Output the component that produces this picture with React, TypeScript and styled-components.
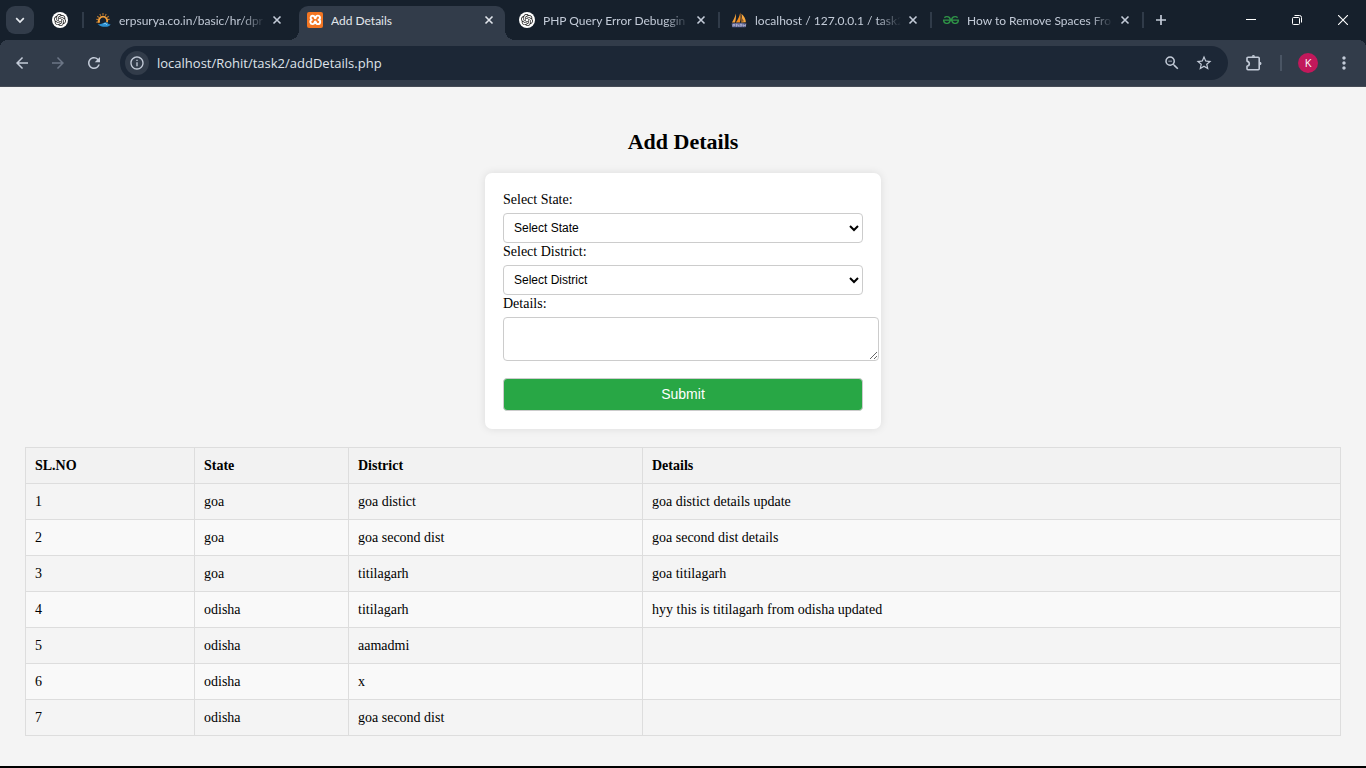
import React from "react";
import styled, { createGlobalStyle } from "styled-components";
import {
  MdArrowBack,
  MdArrowForward,
  MdInfoOutline,
  MdMoreVert,
  MdRefresh,
  MdStarBorder,
  MdZoomOut,
} from "react-icons/md";
import { SiGeeksforgeeks, SiOpenai } from "react-icons/si";

const GlobalStyle = createGlobalStyle`
  *, *::before, *::after { box-sizing: border-box; }
  body { margin: 0; background: #f4f4f4; }
  button { font: inherit; cursor: pointer; }
`;

const chromeFont = `"Open Sans", "Noto Sans", sans-serif`;
const tabFont = `Lato, "Open Sans", sans-serif`;
const serif = `"Liberation Serif", "Times New Roman", serif`;
const sans = `"Liberation Sans", Arial, sans-serif`;

const Window = styled.div`
  display: flex;
  flex-direction: column;
  min-height: 100vh;
  border-bottom: 2px solid #000;
  background: #f4f4f4;
`;

/* ---------- browser chrome ---------- */

const TabStrip = styled.header`
  display: flex;
  align-items: center;
  height: 40px;
  padding-left: 6px;
  background: #16202c;
  font-family: ${tabFont};
  font-size: 12px;
  color: #c3cbd8;
`;

const IconButton = styled.button<{ $w?: number; $h?: number; $dim?: boolean }>`
  display: inline-flex;
  align-items: center;
  justify-content: center;
  flex: none;
  width: ${({ $w = 28 }) => $w}px;
  height: ${({ $h = 28 }) => $h}px;
  padding: 0;
  border: 0;
  background: none;
  color: ${({ $dim }) => ($dim ? "#6c7686" : "#c3cbd8")};
`;

const TabSearch = styled(IconButton)`
  border-radius: 9px;
  background: #323c4a;
  color: #e6eaf0;
`;

const PinnedTab = styled.div`
  display: flex;
  justify-content: center;
  flex: none;
  width: 47px;
  padding-left: 5px;
`;

const Separator = styled.span`
  flex: none;
  width: 2px;
  height: 16px;
  margin: 0 3px 0 1px;
  background: #303b49;
`;

const Gap = styled(Separator)`
  background: transparent;
`;

const Tab = styled.div<{ $active?: boolean }>`
  position: relative;
  display: flex;
  align-items: center;
  align-self: flex-end;
  flex: 0 1 206px;
  min-width: 0;
  height: 34px;
  padding: 0 8px 6px;
  border-radius: 9px 9px 0 0;
  background: ${({ $active }) => ($active ? "#323c4a" : "transparent")};
  color: ${({ $active }) => ($active ? "#e2e6ec" : "#c3cbd8")};

  &::before,
  &::after {
    content: "";
    display: ${({ $active }) => ($active ? "block" : "none")};
    position: absolute;
    bottom: 0;
    width: 10px;
    height: 10px;
  }
  &::before {
    right: 100%;
    background: radial-gradient(circle at 0 0, transparent 10px, #323c4a 10px);
  }
  &::after {
    left: 100%;
    background: radial-gradient(circle at 100% 0, transparent 10px, #323c4a 10px);
  }
`;

const TabTitle = styled.span<{ $fade?: boolean }>`
  flex: 1;
  min-width: 0;
  margin: 0 4px 0 8px;
  padding-top: 2px;
  overflow: hidden;
  white-space: nowrap;
  line-height: 20px;
  mask-image: ${({ $fade }) =>
    $fade ? "linear-gradient(to right, #000 122px, transparent 146px)" : "none"};
`;

const CloseTab = styled(IconButton)`
  color: inherit;
`;

const Disc = styled.span`
  display: inline-flex;
  align-items: center;
  justify-content: center;
  flex: none;
  width: 16px;
  height: 16px;
  border-radius: 50%;
  background: #fff;
  color: #222;
`;

const XamppTile = styled.span`
  display: inline-flex;
  flex: none;
  width: 16px;
  height: 16px;
  border-radius: 2px;
  background: #f37623;
`;

const WindowControls = styled.div`
  display: flex;
  margin-left: auto;
`;

const ControlButton = styled(IconButton)`
  color: #fff;
`;

const Toolbar = styled.nav`
  display: flex;
  align-items: center;
  height: 47px;
  padding: 0 4px;
  border-bottom: 1px solid #454b55;
  background:
    radial-gradient(circle at 8px 8px, transparent 8px, #16202c 8px) 0 0 / 8px 8px no-repeat,
    radial-gradient(circle at 0 8px, transparent 8px, #16202c 8px) 100% 0 / 8px 8px no-repeat,
    #323c4a;
  font-family: ${chromeFont};
`;

const AddressBar = styled.div`
  display: flex;
  align-items: center;
  flex: 1;
  min-width: 0;
  height: 34px;
  margin-left: 8px;
  padding: 0 8px 0 5px;
  border-radius: 17px;
  background: #1c2736;
`;

const SiteInfo = styled(IconButton)`
  border-radius: 50%;
  background: #323c4a;
`;

const Address = styled.input`
  flex: 1;
  min-width: 0;
  padding: 0;
  margin-left: 8px;
  border: 0;
  outline: 0;
  background: none;
  font-family: ${chromeFont};
  font-size: 13px;
  color: #dfe3ea;
`;

const ToolbarDivider = styled.span`
  width: 2px;
  height: 16px;
  margin-right: 8px;
  background: #4a5564;
`;

const Avatar = styled.span`
  display: flex;
  align-items: center;
  justify-content: center;
  width: 20px;
  height: 20px;
  border-radius: 50%;
  background: #c2185b;
  color: #fff;
  font-size: 11px;
  line-height: 20px;
`;

/* ---------- page ---------- */

const Page = styled.main`
  flex: 1;
  padding: 43px 25px 30px;
  font-family: ${serif};
  font-size: 14px;
  color: #000;
`;

const Heading = styled.h2`
  margin: 0 0 19px;
  font-size: 22px;
  line-height: 24px;
  text-align: center;
`;

const Card = styled.form`
  width: 100%;
  max-width: 396px;
  margin: 0 auto 18px;
  padding: 18px;
  border-radius: 7px;
  background: #fff;
  box-shadow: 0 0 9px rgba(0, 0, 0, 0.1);
`;

const Label = styled.label`
  display: block;
  margin-bottom: 5px;
  line-height: 17px;
`;

const Select = styled.select`
  display: block;
  width: 100%;
  height: 30px;
  padding: 0 6px;
  border: 1px solid #ccc;
  border-radius: 4px;
  background: #fff;
  font-family: ${sans};
  font-size: 12px;
  color: #000;
`;

const TextArea = styled.textarea`
  display: block;
  box-sizing: content-box;
  width: 100%;
  height: 28px;
  margin-bottom: 17px;
  padding: 7px;
  border: 1px solid #ccc;
  border-radius: 4px;
  font-family: ${sans};
  font-size: 12px;
`;

const Submit = styled.button`
  display: block;
  width: 100%;
  height: 33px;
  padding: 0 0 2px;
  border: 1px solid #ccc;
  border-radius: 4px;
  background: #28a745;
  color: #fff;
  && {
    font-family: ${sans};
    font-size: 14px;
  }
`;

const Table = styled.table`
  width: 100%;
  table-layout: fixed;
  border-collapse: collapse;

  tbody tr:nth-child(even) {
    background: #f9f9f9;
  }
`;

const HeadCell = styled.th<{ $width?: string }>`
  width: ${({ $width = "auto" }) => $width};
  height: 36px;
  padding: 0 9px;
  border: 1px solid #ddd;
  background: #f2f2f2;
  text-align: left;
`;

const Cell = styled.td`
  height: 36px;
  padding: 0 9px;
  border: 1px solid #ddd;
`;

/* ---------- drawings ---------- */

const CloseGlyph = () => (
  <svg width="10" height="10" viewBox="0 0 10 10" fill="none" stroke="currentColor" strokeWidth="1.6">
    <path d="M1.5 1.5l7 7M8.5 1.5l-7 7" />
  </svg>
);

const ChatGptIcon = () => (
  <Disc>
    <SiOpenai size={12} />
  </Disc>
);

const SunIcon = () => (
  <svg width="16" height="16" viewBox="0 0 16 16" fill="none">
    <g stroke="#b9782f" strokeWidth="1.1">
      <path d="M8 1v2M4.800 1.900l.9 1.800M11.200 1.900l-.9 1.800M2.300 4.200l1.600 1.300M13.700 4.200l-1.600 1.300M1.200 7.300l2 .3M14.800 7.300l-2 .3M1.400 10.400l1.800-.5" />
    </g>
    <path d="M4.300 10.800a4.200 4.200 0 1 1 7.700-.6" stroke="#f5a03a" strokeWidth="1.900" />
    <path d="M2.600 12c2.400.6 4.200.2 5.800-.9 1.900-1.200 3.800-.9 4.700.4.600.8 1.500 1 2.500.7-.9 1.900-2.700 2.600-5.400 2.600-3 0-5.800-.7-7.600-2.800z" fill="#2b8fd0" />
    <path d="M8.700 11.900c1.300-.8 2.500-.4 2.900.8" stroke="#a5dcf8" strokeWidth=".9" />
  </svg>
);

const SailIcon = () => (
  <svg width="16" height="16" viewBox="0 0 16 16">
    <path d="M4.800 1.600C5.300 5 4.800 8.200 4 10.400H.9C2.600 8 4.100 5 4.800 1.600z" fill="#f5a13a" />
    <path d="M9.200.4c.7 3.500.5 7-.3 10H4.800C7 7.400 8.600 4 9.200.4z" fill="#f08a1d" />
    <path d="M10.400 1.800c2.600 2.200 4.300 5.200 4.500 8.400l-4.700.2c.7-2.800.8-5.800.2-8.600z" fill="#f9a83e" />
    <path d="M10.300 5l2.700 4.200-2.900.7z" fill="#8a5a2a" />
    <path d="M.6 11.400c4.800-1 10-.9 14.900 0l-1 3.800H1.300z" fill="#5d6290" />
    <path d="M2 14.600v-2.200h1.800v1.300H2.500M5.400 11.800v3M7.400 14.600v-1.800M5.400 12.900h2M9 14.800v-2.500h2v1.600H9.500M12.400 14.600v-2l1 1 1-1v2" fill="none" stroke="#c5c8e2" strokeWidth=".7" />
  </svg>
);

const PuzzleIcon = () => (
  <svg width="18" height="18" viewBox="0 0 18 18" fill="none" stroke="currentColor" strokeWidth="1.600" strokeLinejoin="round">
    <path d="M3 3.300h10.200a1 1 0 0 1 1 1v10.400a1 1 0 0 1-1 1H3a1 1 0 0 1-1-1v-2.500c1.400-.3 2.300-1.200 2.300-2.500S3.400 7.400 2 7.100V4.300a1 1 0 0 1 1-1z" />
    <path d="M6.700 2.700a1.700 1.700 0 0 1 3.400 0zM14.800 7.800a1.700 1.700 0 0 1 0 3.400z" fill="currentColor" stroke="none" />
  </svg>
);

const XamppIcon = () => (
  <XamppTile>
    <svg width="16" height="16" viewBox="0 0 16 16" fill="none">
      <path
        d="M5.800 3.800a2.100 2.100 0 0 0-1 4 2.200 2.200 0 1 0 2.900 2.400c0-.7.200-.8.600-.8s.5.200.5.800a2.200 2.200 0 1 0 2.600-2.400 2.100 2.100 0 1 0-2.600-2.200c0 .6-.2.700-.6.700s-.5-.2-.5-.7a2.100 2.100 0 0 0-1.900-1.800z"
        stroke="#fff"
        strokeWidth="1.900"
        strokeLinejoin="round"
      />
    </svg>
  </XamppTile>
);

type TabInfo = { title: string; icon: React.ReactNode; active?: boolean };

const tabs: TabInfo[] = [
  { title: "erpsurya.co.in/basic/hr/dpr", icon: <SunIcon /> },
  { title: "Add Details", icon: <XamppIcon />, active: true },
  { title: "PHP Query Error Debuggin", icon: <ChatGptIcon /> },
  { title: "localhost / 127.0.0.1 / task2", icon: <SailIcon /> },
  { title: "How to Remove Spaces Fro", icon: <SiGeeksforgeeks size={16} color="#2f9447" /> },
];

/* ---------- data ---------- */

const rows = [
  ["1", "goa", "goa distict", "goa distict details update"],
  ["2", "goa", "goa second dist", "goa second dist details"],
  ["3", "goa", "titilagarh", "goa titilagarh"],
  ["4", "odisha", "titilagarh", "hyy this is titilagarh from odisha updated"],
  ["5", "odisha", "aamadmi", ""],
  ["6", "odisha", "x", ""],
  ["7", "odisha", "goa second dist", ""],
];

export default function App() {
  return (
    <Window>
      <GlobalStyle />
      <TabStrip>
        <TabSearch aria-label="Search tabs">
          <svg width="10" height="10" viewBox="0 0 10 10" fill="none" stroke="currentColor" strokeWidth="1.700">
            <path d="M1.200 3.200L5 7l3.800-3.800" />
          </svg>
        </TabSearch>
        <PinnedTab>
          <ChatGptIcon />
        </PinnedTab>
        {tabs.map((tab, i) => (
          <React.Fragment key={tab.title}>
            {tab.active || tabs[i - 1]?.active ? <Gap /> : <Separator />}
            <Tab $active={tab.active}>
              {tab.icon}
              <TabTitle $fade={!tab.active}>{tab.title}</TabTitle>
              <CloseTab $w={16} $h={16} aria-label="Close tab">
                <CloseGlyph />
              </CloseTab>
            </Tab>
          </React.Fragment>
        ))}
        <Separator />
        <IconButton aria-label="New tab">
          <svg width="12" height="12" viewBox="0 0 12 12" fill="none" stroke="currentColor" strokeWidth="1.700">
            <path d="M6 1v10M1 6h10" />
          </svg>
        </IconButton>
        <WindowControls>
          <ControlButton $w={46} $h={40} aria-label="Minimize">
            <svg width="10" height="10" viewBox="0 0 10 10" stroke="currentColor">
              <path d="M0 4.500h10" />
            </svg>
          </ControlButton>
          <ControlButton $w={46} $h={40} aria-label="Restore">
            <svg width="10" height="10" viewBox="0 0 10 10" fill="none" stroke="currentColor">
              <rect x="0.500" y="2.500" width="7" height="7" rx="1" />
              <path d="M2.500.5h5a2 2 0 0 1 2 2v5" />
            </svg>
          </ControlButton>
          <ControlButton $w={46} $h={40} aria-label="Close">
            <svg width="10" height="10" viewBox="0 0 10 10" stroke="currentColor" strokeWidth="1.100">
              <path d="M0 0l10 10M10 0L0 10" />
            </svg>
          </ControlButton>
        </WindowControls>
      </TabStrip>

      <Toolbar>
        <IconButton $w={36} aria-label="Back">
          <MdArrowBack size={18} />
        </IconButton>
        <IconButton $w={36} $dim aria-label="Forward">
          <MdArrowForward size={18} />
        </IconButton>
        <IconButton $w={36} aria-label="Reload">
          <MdRefresh size={18} />
        </IconButton>
        <AddressBar>
          <SiteInfo $w={24} $h={24} aria-label="Site information">
            <MdInfoOutline size={16} />
          </SiteInfo>
          <Address aria-label="Address" defaultValue="localhost/Rohit/task2/addDetails.php" />
          <IconButton $w={32} aria-label="Zoom">
            <MdZoomOut size={18} />
          </IconButton>
          <IconButton $w={32} aria-label="Bookmark">
            <MdStarBorder size={18} />
          </IconButton>
        </AddressBar>
        <IconButton $w={52} aria-label="Extensions">
          <PuzzleIcon />
        </IconButton>
        <ToolbarDivider />
        <IconButton $w={36} aria-label="Profile">
          <Avatar>K</Avatar>
        </IconButton>
        <IconButton $w={36} aria-label="Menu">
          <MdMoreVert size={20} />
        </IconButton>
      </Toolbar>

      <Page>
        <Heading>Add Details</Heading>
        <Card onSubmit={(e) => e.preventDefault()}>
          <Label htmlFor="state">Select State:</Label>
          <Select id="state">
            <option>Select State</option>
          </Select>
          <Label htmlFor="district">Select District:</Label>
          <Select id="district">
            <option>Select District</option>
          </Select>
          <Label htmlFor="details">Details:</Label>
          <TextArea id="details" />
          <Submit type="submit">Submit</Submit>
        </Card>
        <Table>
          <thead>
            <tr>
              <HeadCell $width="169px">SL.NO</HeadCell>
              <HeadCell $width="154px">State</HeadCell>
              <HeadCell $width="294px">District</HeadCell>
              <HeadCell>Details</HeadCell>
            </tr>
          </thead>
          <tbody>
            {rows.map((row) => (
              <tr key={row[0]}>
                {row.map((text, i) => (
                  <Cell key={i}>{text}</Cell>
                ))}
              </tr>
            ))}
          </tbody>
        </Table>
      </Page>
    </Window>
  );
}
